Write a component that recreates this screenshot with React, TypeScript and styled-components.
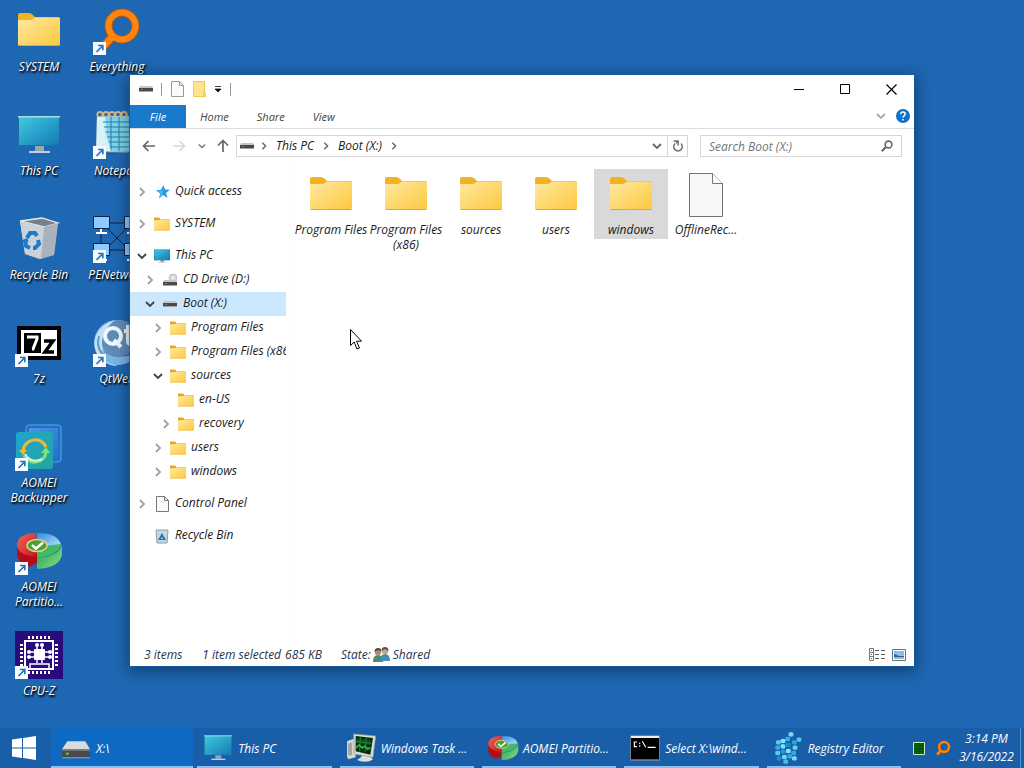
import React from "react";
import styled, { createGlobalStyle } from "styled-components";

const GlobalStyle = createGlobalStyle`
  * { box-sizing: border-box; }
  html, body, #root { height: 100%; margin: 0; }
  body {
    overflow: hidden;
    font: italic 12px/15px "Open Sans", "Noto Sans", sans-serif;
    color: #1a1a1a;
  }
  button, input { font: inherit; color: inherit; border: 0; padding: 0; margin: 0; background: none; border-radius: 0; }
  svg { display: block; flex: none; }
`;

const Screen = styled.div`
  display: flex;
  flex-direction: column;
  height: 100vh;
  background: #1e67b3;
  position: relative;
`;

const Desktop = styled.main`
  flex: 1;
  min-height: 0;
  display: flex;
  padding-top: 7px;
`;

const DesktopColumn = styled.div`
  display: flex;
  flex-direction: column;
  width: 78px;
`;

const Shortcut = styled.button`
  height: 104px;
  flex: none;
  display: flex;
  flex-direction: column;
  align-items: center;
  justify-content: flex-start;
  gap: 4px;
  color: #fff;
  text-shadow: 1px 1px 2px #000, 1px 2px 2px rgba(0, 0, 0, 0.8);
`;

const ShortcutLabel = styled.span`
  width: 64px;
  display: flex;
  justify-content: center;
  text-align: center;
`;

/* Explorer window */

const Window = styled.section`
  position: absolute;
  top: 75px;
  left: 130px;
  right: 110px;
  bottom: 102px;
  display: flex;
  flex-direction: column;
  background: #fff;
  box-shadow: 0 0 0 1px rgba(20, 96, 170, 0.7), 0 3px 14px 2px rgba(0, 0, 0, 0.4);
`;

const TitleBar = styled.header`
  height: 30px;
  display: flex;
  align-items: center;
  padding: 0 0 2px 9px;
`;

const QuickTools = styled.div`
  display: flex;
  align-items: center;
  flex: 1;
  gap: 7px;
`;

const Rule = styled.span`
  width: 1px;
  height: 13px;
  margin: 0 1px;
  background: #999;
`;

const ToolButton = styled.button<{ $width?: number }>`
  display: grid;
  place-items: center;
  width: ${(p) => (p.$width ? `${p.$width}px` : "auto")};
`;

const CaptionButton = styled.button`
  width: 46px;
  height: 28px;
  display: grid;
  place-items: center;
`;

const Tabs = styled.nav`
  height: 24px;
  display: flex;
  align-items: stretch;
  border-bottom: 1px solid #dadbdc;
`;

const Tab = styled.button<{ $file?: boolean }>`
  min-width: ${(p) => (p.$file ? "56px" : "0")};
  padding: 0 14px;
  font-size: 11px;
  color: ${(p) => (p.$file ? "#fff" : "#444")};
  background: ${(p) => (p.$file ? "#1979ca" : "transparent")};
`;

const TabsEnd = styled.div`
  margin-left: auto;
  display: flex;
  align-items: center;
  gap: 10px;
  padding: 0 4px 2px 0;
`;

const AddressRow = styled.div`
  height: 34px;
  display: flex;
  align-items: center;
  padding: 0 12px 0 4px;
`;

const NavButtons = styled.div`
  display: flex;
  align-items: center;
`;

const AddressBox = styled.div`
  flex: 1;
  height: 22px;
  display: flex;
  align-items: stretch;
  border: 1px solid #d5d5d5;
`;

const Crumbs = styled.div`
  flex: 1;
  display: flex;
  align-items: center;
  gap: 6px;
  padding: 0 3px;
`;

const Crumb = styled.button`
  height: 20px;
  padding: 0 2px 2px;
`;

const BoxButton = styled.button<{ $divided?: boolean }>`
  width: 20px;
  display: grid;
  place-items: center;
  border-left: ${(p) => (p.$divided ? "1px solid #d5d5d5" : "0")};
`;

const SearchBox = styled.label`
  width: 202px;
  height: 22px;
  margin-left: 12px;
  padding: 0 8px;
  display: flex;
  align-items: center;
  border: 1px solid #d5d5d5;
`;

const SearchInput = styled.input`
  flex: 1;
  min-width: 0;
  outline: none;
  &::placeholder { color: #757575; opacity: 1; }
`;

const Body = styled.div`
  flex: 1;
  min-height: 0;
  display: flex;
`;

const Tree = styled.nav`
  width: 156px;
  overflow: hidden;
  padding-top: 17px;
`;

const Branch = styled.div<{ $spaced?: boolean }>`
  margin-bottom: ${(p) => (p.$spaced ? "8px" : "0")};
`;

const TreeRow = styled.button<{ $level: number; $selected?: boolean }>`
  width: 100%;
  height: 24px;
  display: flex;
  align-items: center;
  white-space: nowrap;
  padding-left: ${(p) => 7 + p.$level * 8}px;
  background: ${(p) => (p.$selected ? "#cce8ff" : "transparent")};
`;

const TreeChevron = styled.span`
  width: 16px;
  flex: none;
`;

const TreeIcon = styled.span`
  width: 18px;
  height: 16px;
  margin-right: 4px;
  flex: none;
  display: grid;
  place-items: center;
`;

const TreeLabel = styled.span`
  line-height: 14px;
  padding-bottom: 2px;
`;

const Files = styled.div`
  flex: 1;
  display: flex;
  flex-wrap: wrap;
  align-content: flex-start;
  gap: 1px;
  padding: 6px 0 0 3px;
  margin-left: 4px;
  border-left: 1px solid #fafafa;
`;

const FileItem = styled.button<{ $selected?: boolean }>`
  width: 74px;
  display: flex;
  flex-direction: column;
  align-items: center;
  align-self: flex-start;
  gap: 3px;
  padding: 2px 0;
  background: ${(p) => (p.$selected ? "#d9d9d9" : "transparent")};
`;

const StatusBar = styled.footer`
  height: 23px;
  display: flex;
  align-items: center;
  padding: 0 8px 0 14px;
  color: #26334d;
`;

const Status = styled.span<{ $gap: number }>`
  margin-right: ${(p) => p.$gap}px;
`;

const ViewButtons = styled.div`
  margin-left: auto;
  display: flex;
  gap: 6px;
`;

/* Task bar */

const TaskBar = styled.footer`
  height: 40px;
  display: flex;
  background: #195ea9;
  color: #fff;
`;

const StartButton = styled.button`
  width: 51px;
  padding-left: 12px;
`;

const Tasks = styled.div`
  flex: 1;
  display: flex;
  min-width: 0;
`;

const Task = styled.button<{ $active?: boolean }>`
  flex: 1 1 0;
  min-width: 0;
  position: relative;
  display: flex;
  align-items: center;
  gap: 4px;
  padding-left: 9px;
  white-space: nowrap;
  overflow: hidden;
  background: ${(p) => (p.$active ? "#0d69c2" : "transparent")};
  &::after {
    content: "";
    position: absolute;
    left: ${(p) => (p.$active ? "0" : "4px")};
    right: ${(p) => (p.$active ? "0" : "4px")};
    bottom: 0;
    height: 2px;
    background: #85c2fa;
  }
`;

const Tray = styled.div`
  width: 119px;
  display: flex;
  align-items: center;
  padding: 0 3px 0 8px;
  gap: 10px;
`;

const Clock = styled.button`
  flex: 1;
  height: 40px;
  padding-right: 6px;
  border-right: 1px solid #5b95d0;
  line-height: 18px;
  text-align: center;
  white-space: nowrap;
  margin-left: -2px;
`;

/* Drawings */

const Gradient = ({ id, from, to }: { id: string; from: string; to: string }) => (
  <linearGradient id={id} x1="0" y1="0" x2="1" y2="1">
    <stop offset="0" stopColor={from} />
    <stop offset="1" stopColor={to} />
  </linearGradient>
);

const DefsHolder = styled.svg`
  position: absolute;
`;

const SharedDefs = () => (
  <DefsHolder width="0" height="0" aria-hidden>
    <defs>
      <Gradient id="folder" from="#ffe9a4" to="#fdc83c" />
      <Gradient id="screen" from="#3ccbe0" to="#1579b5" />
      <Gradient id="bin" from="#d8dde0" to="#929ba6" />
      <Gradient id="teal" from="#1fa5cf" to="#23a6a0" />
      <Gradient id="blueGlass" from="#5aa9f0" to="#1f73cf" />
      <Gradient id="red" from="#f2685c" to="#c4141d" />
      <Gradient id="green" from="#1e9a4a" to="#8be08a" />
      <Gradient id="sky" from="#2f86e2" to="#b9e2fb" />
      <Gradient id="globe" from="#a8d4f2" to="#1d4f92" />
      <Gradient id="pad" from="#e8fbff" to="#48b9dc" />
    </defs>
  </DefsHolder>
);

const LinkArrow = () => (
  <g>
    <path d="M0 35h13v13H0z" fill="#f8fbff" />
    <path d="M3.500 45L9 39.500M5 38.500h4.800v4.800" fill="none" stroke="#2273bd" strokeWidth="1.700" />
  </g>
);

type IconProps = { size?: number };

const Svg = ({ size = 48, children }: { size?: number; children: React.ReactNode }) => (
  <svg width={size} height={size} viewBox="0 0 48 48" aria-hidden>
    {children}
  </svg>
);

const FolderShape = ({ tab }: { tab: string }) => (
  <g>
    <path d="M3 16V8q0-2 2-2h9q2 0 3.500 1.500L20 10H43.500q1.500 0 1.500 1.500V16z" fill={tab} />
    <path d="M3 13h12q2 0 3.500-1.500T22 10.500H43.500q1.500 0 1.500 1.500V37q0 2-2 2H5q-2 0-2-2z" fill="url(#folder)" />
    <path d="M3.500 38.500h41" stroke="#dca83e" strokeWidth="1" />
  </g>
);

const FolderIcon = ({ size }: IconProps) => (
  <Svg size={size}><FolderShape tab="#f0b323" /></Svg>
);

const SmallFolder = () => (
  <svg width="16" height="14" viewBox="3 5 42 35" preserveAspectRatio="none" aria-hidden>
    <FolderShape tab="#d8ab13" />
  </svg>
);

const MonitorShape = () => (
  <g>
    <path d="M20 34h9v6h-9z" fill="#9aa5ad" />
    <path d="M14 40h21v2H14z" fill="#c5d0d6" />
    <path d="M3 5h42v30H3z" fill="#1a6f9f" />
    <path d="M4 6h40v28H4z" fill="url(#screen)" />
    <path d="M3 5h42v1.500H3z" fill="#a9dce8" />
  </g>
);

const MonitorIcon = ({ size }: IconProps) => <Svg size={size}><MonitorShape /></Svg>;

const SmallMonitor = () => (
  <svg width="16" height="14" viewBox="3 5 42 37" preserveAspectRatio="none" aria-hidden><MonitorShape /></svg>
);

const BinShape = () => (
  <g>
    <path d="M5 6l22-3 16 5-4 32-15 4-14-5z" fill="url(#bin)" />
    <path d="M5 6l22-3 16 5-14 4z" fill="#75808d" stroke="#e4e9ec" strokeWidth="1.300" />
    <path d="M29 12l14-4-4 32-13 4z" fill="#aab3bb" />
    <path d="M5 6l24 6-3 32-16-5z" fill="#cbd3d9" />
    <g fill="none" stroke="#1d7cc9" strokeWidth="4">
      <path d="M12 23l3-5h5l2 3" />
      <path d="M23 25l1 4-4 4h-2" />
      <path d="M15 33l-4-2-1-5 3-1" />
    </g>
  </g>
);

const BinIcon = () => <Svg><BinShape /></Svg>;

const SmallBin = () => (
  <svg width="16" height="16" viewBox="0 0 16 16" aria-hidden>
    <path d="M2 2h12l-1 13H3z" fill="#c5d6e1" stroke="#8b9eaa" />
    <path d="M8 5l4 7H4z" fill="#1b75be" />
    <path d="M8 9l1 2H7z" fill="#d9f0fa" />
  </svg>
);

const MagnifierShape = () => (
  <g fill="none" stroke="#b75b0b">
    <path d="M20 29l-10 11" strokeWidth="9" />
    <circle cx="29" cy="19" r="13.500" strokeWidth="8" />
    <path d="M20 29l-10 11" stroke="#ff8410" strokeWidth="6.500" />
    <circle cx="29" cy="19" r="13.500" stroke="#ff8410" strokeWidth="6" />
  </g>
);

const EverythingIcon = () => <Svg><MagnifierShape /><LinkArrow /></Svg>;

const NotepadIcon = () => (
  <Svg>
    <path d="M9 43l28-1 8-6-3-3z" fill="#31505e" />
    <path d="M4 5h29l9 34-8 3-31-1z" fill="url(#pad)" stroke="#4d7394" />
    <path d="M12 5h24v34l-20 2z" fill="#7fd3ea" />
    <path d="M10 11h26M10 16h26M11 21h25M12 26h24M13 31h23M14 36h22M18 6v34M26 6v34" stroke="#287da8" strokeWidth="1" />
    <path d="M4 6l5 3 9 31H3z" fill="#d6f2f8" />
    {[5, 11, 17, 23, 29].map((x) => (
      <path key={x} d={`M${x} 6q-2-5 2-5t2 5`} fill="none" stroke="#d3b98a" strokeWidth="2" />
    ))}
    <LinkArrow />
  </Svg>
);

const NetworkIcon = () => (
  <Svg>
    <path d="M14 8h22M8 13v18M14 35h22M14 13l20 20M34 13L14 33" stroke="#10233d" strokeWidth="1" />
    {[[0, 1], [31, 1], [0, 28], [31, 28]].map(([x, y]) => (
      <g key={`${x}-${y}`}>
        <path d={`M${x + 0.5} ${y + 0.5}h16v12h-16z`} fill="#8fcaff" stroke="#0a2348" />
        <path d={`M${x + 8} ${y + 13}v3M${x + 3} ${y + 17}h11`} stroke="#fff" strokeWidth="2" />
      </g>
    ))}
    <LinkArrow />
  </Svg>
);

const SevenZipIcon = () => (
  <Svg>
    <path d="M2 7h44v34H2z" fill="#000" />
    <path d="M6 11h36v26H6z" fill="#fff" />
    <path d="M9 14h17v20H9z" fill="#000" />
    <path d="M12 18h10v2l-4 10h-1" fill="none" stroke="#fff" strokeWidth="3" />
    <path d="M29 22h9L30 33h9" fill="none" stroke="#000" strokeWidth="3.500" />
    <LinkArrow />
  </Svg>
);

const QtIcon = () => (
  <Svg>
    <circle cx="24" cy="24" r="23" fill="url(#globe)" />
    <circle cx="26" cy="19" r="18" fill="#5f8db8" />
    <path d="M22 1C-8 10-3 45 24 47c-17-9-22-30-2-46z" fill="#c4e0f4" />
    <path d="M8 31q14 12 36 3-6 12-20 12T8 31z" fill="#78b4e4" />
    <path d="M6 17q-3 10 3 18" stroke="#5e9acb" strokeWidth="2" fill="none" />
    <circle cx="20" cy="17" r="8" fill="none" stroke="#eef8fd" strokeWidth="4" />
    <path d="M21 21l7 7M35 6v16q0 4 5 3M31 12h9" stroke="#eef8fd" strokeWidth="4" fill="none" />
    <LinkArrow />
  </Svg>
);

const BackupperIcon = () => (
  <Svg>
    <rect x="11" y="2" width="35" height="37" rx="3" fill="#236fc4" stroke="#5ca7ee" />
    <path d="M14 5h29v31H14z" fill="url(#blueGlass)" opacity=".7" />
    <rect x="1" y="9" width="37" height="37" rx="3" fill="url(#teal)" />
    <g fill="none" strokeWidth="3">
      <path d="M8 29c0-13 18-17 23-5" stroke="#eeb93b" />
      <path d="M31 27c1 13-17 17-22 5" stroke="#7ce17f" />
      <path d="M10 31q6 10 17 5" stroke="#d9f3db" strokeWidth="2" />
    </g>
    <path d="M4 27h8l-4 5z" fill="#eeb93b" />
    <path d="M26 30h9l-4-6z" fill="#7ce17f" />
    <LinkArrow />
  </Svg>
);

const PartitionShape = () => (
  <g>
    <path d="M2 20v8q2 10 12 12l8-4V24z" fill="#b50d17" />
    <path d="M2 18C2 9 12 6 21 6l1 13-1 11q-18-2-19-12z" fill="url(#red)" />
    <path d="M22 6c14-1 24 5 24 13H22z" fill="url(#sky)" />
    <path d="M22 31q23-2 25-14v11q-3 13-25 14z" fill="url(#green)" />
    <path d="M22 31q23-3 24-14l-18 2-6 3z" fill="#41b966" />
    <ellipse cx="22" cy="18.500" rx="10" ry="6" fill="#49a02c" stroke="#d8d08c" strokeWidth="1.500" />
    <path d="M17 18l4 3.500 7-6" stroke="#fff" strokeWidth="2.600" fill="none" />
  </g>
);

const PartitionIcon = ({ size, linked }: IconProps & { linked?: boolean }) => (
  <Svg size={size}><PartitionShape />{linked && <LinkArrow />}</Svg>
);

const CpuIcon = () => (
  <Svg>
    <path d="M0 0h48v48H0z" fill="#2b0b7c" />
    <path d="M13 6.500h22M13 41.500h22" stroke="#fff" strokeWidth="3" strokeDasharray="2 2" />
    <path d="M6.500 13v22M41.500 13v22" stroke="#fff" strokeWidth="3" strokeDasharray="2 2" />
    <rect x="10" y="10" width="28" height="28" fill="none" stroke="#fff" strokeWidth="2" />
    <rect x="19" y="18" width="11" height="11" rx="1" fill="#fff" />
    <g stroke="#fff" strokeWidth="1.500">
      <path d="M22 18v-4M27 18v-4M19 21h-5M19 26h-5M30 21h5M30 26h5M22 29v3M27 29v3M15 38v-5h19v5" fill="none" />
    </g>
    <g fill="#fff">
      <circle cx="22" cy="14" r="2" /><circle cx="27" cy="14" r="2" />
      <circle cx="14" cy="21" r="2" /><circle cx="14" cy="26" r="2" />
      <circle cx="35" cy="21" r="2" /><circle cx="35" cy="26" r="2" />
    </g>
    <LinkArrow />
  </Svg>
);

const PageIcon = () => (
  <Svg>
    <path d="M7.500 2.500H30.500L40.500 12.500V45.500H7.500z" fill="#f8f8f8" stroke="#747474" />
    <path d="M30.500 2.500v10h10" fill="#fff" stroke="#747474" />
  </Svg>
);

const SmallPage = ({ faint }: { faint?: boolean }) => (
  <svg width="13" height="16" viewBox="0 0 13 16" aria-hidden>
    <path d="M.5 .5h8l4 4v11H.5z" fill="#fafafa" stroke={faint ? "#999" : "#777"} />
    <path d="M8.500 .5v4h4" fill="none" stroke={faint ? "#999" : "#777"} />
  </svg>
);

const FlatDrive = ({ disc }: { disc?: boolean }) => (
  <svg width="14" height={disc ? 14 : 6} viewBox={disc ? "0 -7 14 14" : "0 0 14 6"} aria-hidden>
    {disc && (
      <g>
        <circle cx="10" cy="-2" r="4" fill="#d7d9da" stroke="#aaa" strokeWidth=".6" />
        <circle cx="10" cy="-2" r="1" fill="#fff" />
      </g>
    )}
    <path d="M1 0h12l1 2H0z" fill="#c3c5c6" />
    <path d="M0 2h14v3H0z" fill="#48494b" />
    <path d="M0 5h14v1H0z" fill="#a5a6a7" />
    <path d="M2 3.500h2" stroke="#73816f" strokeWidth="1" />
  </svg>
);

const StarIcon = () => (
  <svg width="16" height="14" viewBox="-2 0 16 14" aria-hidden>
    <path d="M7.500 0l1.500 4.500 5 .2-4 3L11.500 13 7.200 10 3 13.500l1.200-5L0 5.500l5-.7z" fill="#2398e6" />
    <path d="M7.500 2L7 9 3.500 12.500l1.200-4L2 6l4-.5z" fill="#4fb0f0" />
  </svg>
);

const Chevron = ({ dir = "right", color = "#a0a0a0", size = 10 }: { dir?: "right" | "down"; color?: string; size?: number }) => (
  <svg width={size} height={size} viewBox="0 0 10 10" aria-hidden>
    <path d={dir === "right" ? "M3 1l4 4-4 4" : "M1 3l4 4 4-4"} fill="none" stroke={color} strokeWidth="1.800" />
  </svg>
);

const ArrowIcon = ({ turn = 0, color = "#666" }: { turn?: number; color?: string }) => (
  <svg width="14" height="14" viewBox="0 0 14 14" aria-hidden>
    <path d="M13 7H2M6.500 2L1.500 7l5 5" transform={`rotate(${turn} 7 7)`} fill="none" stroke={color} strokeWidth="1.700" />
  </svg>
);

const RefreshIcon = () => (
  <svg width="12" height="14" viewBox="0 0 12 14" aria-hidden>
    <path d="M3 4.500a4.300 4.300 0 1 0 6 0" fill="none" stroke="#707070" strokeWidth="1.500" />
    <path d="M1.500 2h4.700v4.800M5.700 2.500L4 4.300" fill="none" stroke="#707070" strokeWidth="1.400" />
  </svg>
);

const SearchIcon = () => (
  <svg width="12" height="12" viewBox="0 0 12 12" aria-hidden>
    <circle cx="7.500" cy="4.500" r="3.400" fill="none" stroke="#666" strokeWidth="1.600" />
    <path d="M5 7L.8 11.200" stroke="#666" strokeWidth="2" />
  </svg>
);

const PeopleIcon = () => (
  <svg width="17" height="16" viewBox="0 0 17 16" aria-hidden>
    <path d="M0 15q0-7 5-7t5 7z" fill="#4d8b62" />
    <circle cx="5" cy="5" r="3.200" fill="#b98a68" />
    <path d="M1.500 5q0-4 3.500-4t3.500 3l-4-1z" fill="#54483e" />
    <path d="M7 14q0-7 5-7t5 7z" fill="#458bc0" />
    <circle cx="12" cy="4" r="3.200" fill="#caa27e" />
    <path d="M8.500 4q0-4 3.500-4t3.500 4l-4-2z" fill="#5a5550" />
  </svg>
);

const DetailsIcon = () => (
  <svg width="17" height="13" viewBox="0 0 17 13" aria-hidden>
    <path d="M.5 .5h4v12h-4zM.5 4.500h4M.5 8.500h4" fill="none" stroke="#777" />
    <path d="M2 2.500h1M2 6.500h1M2 10.500h1M6 2.500h4M12 2.500h4M6 6.500h4M12 6.500h4M6 10.500h4M12 10.500h4" stroke="#5c5c5c" />
  </svg>
);

const ThumbnailsIcon = () => (
  <svg width="14" height="12" viewBox="0 0 14 12" aria-hidden>
    <path d="M.5 .5h13v11H.5z" fill="#fff" stroke="#54798f" />
    <path d="M2 2h10v8H2z" fill="#8cbdeb" />
    <path d="M2 5l5 2h5v3H2z" fill="#34618a" />
    <path d="M2 8h10v2H2z" fill="#9fb8be" />
  </svg>
);

const WindowsLogo = () => (
  <svg width="24" height="24" viewBox="0 0 24 24" aria-hidden>
    <path d="M0 3.500l10-1.400V11.500H0zM11 2l13-2v11.500H11zM0 12.500h10v9.400L0 20.500zM11 12.500h13V24l-13-2z" fill="#fff" />
  </svg>
);

const DriveIcon = () => (
  <Svg size={32}>
    <path d="M11 14h27l7 12H3z" fill="#d9dcdf" />
    <path d="M3 26h42v13H3z" fill="#4a4b4b" />
    <path d="M3 26h42v2H3z" fill="#8b8d8e" />
    <path d="M3 38h42v1.500H3z" fill="#a4a7a8" />
    <path d="M9 31h4v3H9z" fill="#57d84f" />
  </Svg>
);

const TaskManagerIcon = () => (
  <Svg size={32}>
    <path d="M3 14l13-5v29l-11 3-2-4z" fill="#d6d7cf" />
    <path d="M6 17v18M9 16v19" stroke="#777" strokeWidth="1.500" />
    <path d="M26 34l11 2 5 5q-9 7-24 1l6-4z" fill="#dedfd7" />
    <path d="M13 3l33 3-4 32-28-5z" fill="#d9ddd2" stroke="#969a93" />
    <path d="M16 6l26 3-4 25-22-5z" fill="#062b12" />
    <path d="M17 9l22 3-1 8-21-3z" fill="#0f4a1d" />
    <path d="M16 14l24 3M16 21l23 3M23 7l-1 22M32 8l-2 22" stroke="#1c8b35" strokeWidth="1.500" />
    <path d="M17 24l4-5 5 5 4-3 4 5 4-2" fill="none" stroke="#35b93f" strokeWidth="2" />
  </Svg>
);

const ConsoleIcon = () => (
  <Svg size={32}>
    <path d="M2 5h44v38H2z" fill="#8d8d8d" />
    <path d="M3 9h42v32H3z" fill="#000" />
    <path d="M3 6h42v3H3z" fill="#eee" />
    <path d="M12 15H8v7h4M16 16v2M16 20v2M20 14l5 9M28 23h12" fill="none" stroke="#fff" strokeWidth="1.700" />
  </Svg>
);

const cubes: [number, number, string][] = [
  [25, 0, "#7ed9fa"], [20, 7, "#2fb2e8"], [6, 12, "#55cbef"], [13, 10, "#85e3fb"], [30, 12, "#2ba6dc"], [37, 8, "#53c5ef"],
  [5, 20, "#31aee0"], [13, 18, "#7ddffa"], [21, 16, "#198fc8"], [31, 20, "#66d3f5"], [5, 28, "#5acced"], [13, 26, "#239bd2"],
  [21, 25, "#86e4fc"], [29, 28, "#31abe1"], [7, 36, "#1e90c9"], [15, 34, "#6bd9f7"], [23, 33, "#2fa8da"], [30, 36, "#73dcfa"],
  [17, 41, "#44bde8"],
];

const RegistryIcon = () => (
  <Svg size={32}>
    {cubes.map(([x, y, c]) => (
      <path key={`${x}-${y}`} d={`M${x} ${y + 1}l4-1 3 1v5l-3 1-4-1z`} fill={c} />
    ))}
  </Svg>
);

const MeterIcon = () => (
  <svg width="12" height="13" viewBox="0 0 12 13" aria-hidden>
    <path d="M.5 .5h11v12H.5z" fill="#066507" stroke="#cfe5c8" />
    <path d="M3.500 1v11M6.500 1v11M9.500 1v11M1 3.500h10M1 6.500h10M1 9.500h10" stroke="#07400a" strokeDasharray="1 1" />
  </svg>
);

const TrayMagnifier = () => (
  <svg width="16" height="16" viewBox="4 0 44 44" aria-hidden><MagnifierShape /></svg>
);

/* Data */

const columns = [
  [
    { label: ["SYSTEM"], icon: <FolderIcon /> },
    { label: ["This PC"], icon: <MonitorIcon /> },
    { label: ["Recycle Bin"], icon: <BinIcon /> },
    { label: ["7z"], icon: <SevenZipIcon /> },
    { label: ["AOMEI", "Backupper"], icon: <BackupperIcon /> },
    { label: ["AOMEI", "Partitio..."], icon: <PartitionIcon linked /> },
    { label: ["CPU-Z"], icon: <CpuIcon /> },
  ],
  [
    { label: ["Everything"], icon: <EverythingIcon /> },
    { label: ["Notepad"], icon: <NotepadIcon /> },
    { label: ["PENetwork"], icon: <NetworkIcon /> },
    { label: ["QtWeb"], icon: <QtIcon /> },
  ],
];

type Node = {
  label: string;
  level: number;
  icon: React.ReactNode;
  state?: "open" | "closed";
  spaced?: boolean;
  selected?: boolean;
};

const nodes: Node[] = [
  { label: "Quick access", level: 0, icon: <StarIcon />, state: "closed", spaced: true },
  { label: "SYSTEM", level: 0, icon: <SmallFolder />, state: "closed", spaced: true },
  { label: "This PC", level: 0, icon: <SmallMonitor />, state: "open" },
  { label: "CD Drive (D:)", level: 1, icon: <FlatDrive disc />, state: "closed" },
  { label: "Boot (X:)", level: 1, icon: <FlatDrive />, state: "open", selected: true },
  { label: "Program Files", level: 2, icon: <SmallFolder />, state: "closed" },
  { label: "Program Files (x86)", level: 2, icon: <SmallFolder />, state: "closed" },
  { label: "sources", level: 2, icon: <SmallFolder />, state: "open" },
  { label: "en-US", level: 3, icon: <SmallFolder /> },
  { label: "recovery", level: 3, icon: <SmallFolder />, state: "closed" },
  { label: "users", level: 2, icon: <SmallFolder />, state: "closed" },
  { label: "windows", level: 2, icon: <SmallFolder />, state: "closed", spaced: true },
  { label: "Control Panel", level: 0, icon: <SmallPage />, state: "closed", spaced: true },
  { label: "Recycle Bin", level: 0, icon: <SmallBin /> },
];

const files = [
  { label: "Program Files" },
  { label: "Program Files (x86)" },
  { label: "sources" },
  { label: "users" },
  { label: "windows", selected: true },
  { label: "OfflineRec...", page: true },
];

const tasks = [
  { label: "X:\\", icon: <DriveIcon />, active: true },
  { label: "This PC", icon: <MonitorIcon size={32} /> },
  { label: "Windows Task ...", icon: <TaskManagerIcon /> },
  { label: "AOMEI Partitio...", icon: <PartitionIcon size={32} /> },
  { label: "Select X:\\wind...", icon: <ConsoleIcon /> },
  { label: "Registry Editor", icon: <RegistryIcon /> },
];

const Pointer = styled.svg`
  position: absolute;
  left: 350px;
  top: 329px;
  pointer-events: none;
`;

export default function App() {
  return (
    <Screen>
      <GlobalStyle />
      <SharedDefs />
      <Desktop>
        {columns.map((items, i) => (
          <DesktopColumn key={i}>
            {items.map((item) => (
              <Shortcut key={item.label.join(" ")}>
                {item.icon}
                <ShortcutLabel>
                  <span>
                    {item.label.map((line, n) => (
                      <React.Fragment key={line}>
                        {n > 0 && <br />}
                        {line}
                      </React.Fragment>
                    ))}
                  </span>
                </ShortcutLabel>
              </Shortcut>
            ))}
          </DesktopColumn>
        ))}
      </Desktop>

      <Window aria-label="Boot (X:)">
        <TitleBar>
          <QuickTools>
            <FlatDrive />
            <Rule />
            <ToolButton $width={15} aria-label="Properties"><SmallPage faint /></ToolButton>
            <ToolButton $width={15} aria-label="New folder">
              <svg width="15" height="16" viewBox="0 0 15 16" aria-hidden>
                <path d="M1.500 .5h11v10l1.500 5H1.500z" fill="#ffe58a" stroke="#eccb55" />
                <path d="M11 15V9l1.500-1 1.500 7z" fill="#f7d251" />
              </svg>
            </ToolButton>
            <ToolButton aria-label="Customize toolbar">
              <svg width="8" height="8" viewBox="0 0 8 8" aria-hidden>
                <path d="M1 1.500h6M1 4h6L4 7z" fill="#111" stroke="#111" strokeWidth=".8" />
              </svg>
            </ToolButton>
            <Rule />
          </QuickTools>
          <CaptionButton aria-label="Minimize">
            <svg width="10" height="11"><path d="M0 5.500h10" stroke="#000" /></svg>
          </CaptionButton>
          <CaptionButton aria-label="Maximize">
            <svg width="10" height="11"><path d="M.5 .5h9v9h-9z" fill="none" stroke="#000" /></svg>
          </CaptionButton>
          <CaptionButton aria-label="Close">
            <svg width="11" height="11"><path d="M.5 .5l10 10M10.500 .5l-10 10" stroke="#000" strokeWidth="1.200" /></svg>
          </CaptionButton>
        </TitleBar>

        <Tabs>
          <Tab $file>File</Tab>
          <Tab>Home</Tab>
          <Tab>Share</Tab>
          <Tab>View</Tab>
          <TabsEnd>
            <ToolButton aria-label="Expand the ribbon"><Chevron dir="down" color="#aaa" /></ToolButton>
            <ToolButton aria-label="Help">
              <svg width="14" height="14" viewBox="0 0 14 14" aria-hidden>
                <circle cx="7" cy="7" r="7" fill="#0f72c9" />
                <path d="M4.800 5.200q0-2.200 2.200-2.200t2.200 2q0 1-1.200 1.800T7 8.700M7 10v1.600" fill="none" stroke="#fff" strokeWidth="1.500" />
              </svg>
            </ToolButton>
          </TabsEnd>
        </Tabs>

        <AddressRow>
          <NavButtons>
            <ToolButton $width={30} aria-label="Back"><ArrowIcon /></ToolButton>
            <ToolButton $width={30} aria-label="Forward"><ArrowIcon turn={180} color="#d8d8d8" /></ToolButton>
            <ToolButton $width={16} aria-label="Recent locations"><Chevron dir="down" color="#777" size={8} /></ToolButton>
            <ToolButton $width={26} aria-label="Up"><ArrowIcon turn={90} /></ToolButton>
          </NavButtons>
          <AddressBox>
            <Crumbs>
              <FlatDrive />
              <Chevron color="#666" size={8} />
              <Crumb>This PC</Crumb>
              <Chevron color="#666" size={8} />
              <Crumb>Boot (X:)</Crumb>
              <Chevron color="#666" size={8} />
            </Crumbs>
            <BoxButton aria-label="Previous locations"><Chevron dir="down" color="#666" /></BoxButton>
            <BoxButton $divided aria-label="Refresh"><RefreshIcon /></BoxButton>
          </AddressBox>
          <SearchBox>
            <SearchInput type="text" placeholder="Search Boot (X:)" aria-label="Search Boot (X:)" />
            <SearchIcon />
          </SearchBox>
        </AddressRow>

        <Body>
          <Tree aria-label="Folders">
            {nodes.map((n) => (
              <Branch key={n.label + n.level} $spaced={n.spaced}>
                <TreeRow $level={n.level} $selected={n.selected}>
                  <TreeChevron>
                    {n.state && (
                      <Chevron dir={n.state === "open" ? "down" : "right"} color={n.state === "open" ? "#404040" : "#a0a0a0"} />
                    )}
                  </TreeChevron>
                  <TreeIcon>{n.icon}</TreeIcon>
                  <TreeLabel>{n.label}</TreeLabel>
                </TreeRow>
              </Branch>
            ))}
          </Tree>
          <Files>
            {files.map((f) => (
              <FileItem key={f.label} $selected={f.selected}>
                {f.page ? <PageIcon /> : <FolderIcon />}
                <span>{f.label}</span>
              </FileItem>
            ))}
          </Files>
        </Body>

        <StatusBar>
          <Status $gap={20}>3 items</Status>
          <Status $gap={4}>1 item selected</Status>
          <Status $gap={19}>685 KB</Status>
          <Status $gap={2}>State:</Status>
          <PeopleIcon />
          <Status $gap={0}>&nbsp;Shared</Status>
          <ViewButtons>
            <ToolButton aria-label="Details view"><DetailsIcon /></ToolButton>
            <ToolButton aria-label="Thumbnail view"><ThumbnailsIcon /></ToolButton>
          </ViewButtons>
        </StatusBar>
      </Window>

      <Pointer width="12" height="21" viewBox="0 0 12 21" aria-hidden>
        <path d="M.5 .5v16l3.700-3.500 2.800 7 2.500-1-3-6.800h5z" fill="#fff" stroke="#000" />
      </Pointer>

      <TaskBar>
        <StartButton aria-label="Start"><WindowsLogo /></StartButton>
        <Tasks>
          {tasks.map((t) => (
            <Task key={t.label} $active={t.active}>
              {t.icon}
              <span>{t.label}</span>
            </Task>
          ))}
        </Tasks>
        <Tray>
          <MeterIcon />
          <TrayMagnifier />
          <Clock>
            3:14 PM
            <br />
            3/16/2022
          </Clock>
        </Tray>
      </TaskBar>
    </Screen>
  );
}
